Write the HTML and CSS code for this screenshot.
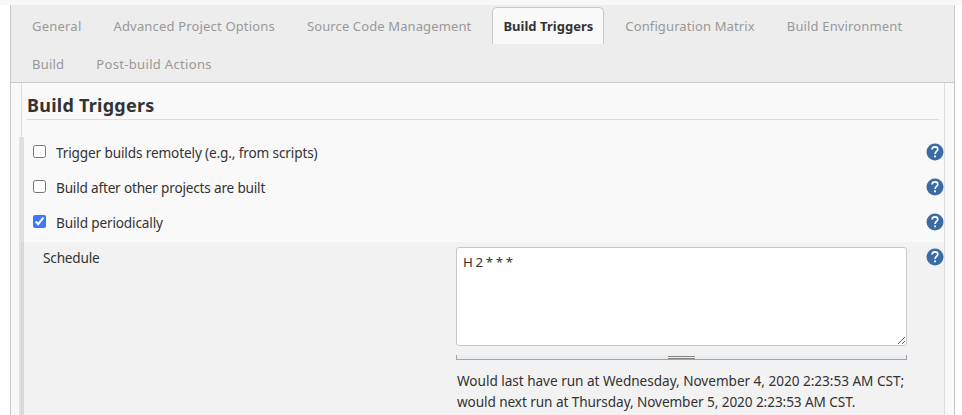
FILE: index.html
```html
<!DOCTYPE html>
<html lang="en">
<head>
<meta charset="utf-8">
<title>Build Triggers</title>
<link rel="stylesheet" href="styles.css">
</head>
<body>
<svg class="defs" width="0" height="0"><symbol id="help" viewBox="0 0 18 18"><circle cx="9" cy="9" r="8.5" fill="#3b6ba5"/><path d="M6.1 6.5C6.2 4.7 7.4 3.9 9 3.9s2.8.9 2.8 2.4c0 2-2.7 2.3-2.7 4.6" fill="none" stroke="#fff" stroke-width="1.7"/><rect x="8.1" y="12.4" width="1.9" height="1.9" fill="#fff"/></symbol></svg>
<main class="frame">
  <nav class="tabs">
    <a class="tab general">General</a>
    <a class="tab advanced">Advanced Project Options</a>
    <a class="tab source">Source Code Management</a>
    <a class="tab active">Build Triggers</a>
    <a class="tab matrix">Configuration Matrix</a>
    <a class="tab environment">Build Environment</a>
    <a class="tab build">Build</a>
    <a class="tab post">Post-build Actions</a>
  </nav>
  <form class="panel">
    <h2 class="title">Build Triggers</h2>
    <div class="section">
      <div class="row"><label class="choice"><input type="checkbox"><span class="t1">Trigger builds remotely (e.g., from scripts)</span></label><svg class="help"><use href="#help"/></svg></div>
      <div class="row"><label class="choice"><input type="checkbox"><span class="t2">Build after other projects are built</span></label><svg class="help"><use href="#help"/></svg></div>
      <div class="row"><label class="choice"><input type="checkbox" checked><span class="t3">Build periodically</span></label><svg class="help"><use href="#help"/></svg></div>
      <div class="schedule">
        <label class="name" for="spec">Schedule</label>
        <div class="field">
          <textarea id="spec" spellcheck="false">H 2 * * *</textarea>
          <div class="grip"><i></i></div>
          <p class="note"><span class="n1">Would last have run at Wednesday, November 4, 2020 2:23:53 AM CST;</span><br><span class="n2">would next run at Thursday, November 5, 2020 2:23:53 AM CST.</span></p>
        </div>
        <svg class="help"><use href="#help"/></svg>
      </div>
    </div>
  </form>
</main>
</body>
</html>
```
FILE: styles.css
```css
* { box-sizing: border-box; }
html { background: #fff; }
body {
  margin: 0;
  height: 415px;
  overflow: hidden;
  border-top: 5px solid #f8f8f8;
  font: 13.6px/21px "Noto Sans", sans-serif;
  color: #333;
}
.defs { display: block; }
.frame {
  width: 945px;
  height: 410px;
  margin-left: 10px;
  border: solid #c8c8c8;
  border-width: 0 1px;
  background: #f9f9f9;
  overflow: hidden;
}
.tabs {
  display: flex;
  flex-wrap: wrap;
  align-content: flex-start;
  gap: 1px 10px;
  height: 78px;
  padding: 2px 10px 0;
  background: #ededed;
  border-bottom: 1px solid #c8c8c8;
}
.tab {
  height: 37px;
  padding: 8px 10px 0;
  border: 1px solid transparent;
  border-bottom: 0;
  border-radius: 5px 5px 0 0;
  color: #999;
  font-size: 13px;
  line-height: 21px;
  white-space: nowrap;
}
.general, .build { letter-spacing: 0.22px; }
.advanced { letter-spacing: 0.17px; }
.source, .matrix { letter-spacing: 0.12px; }
.environment { letter-spacing: 0.15px; }
.post { letter-spacing: 0.33px; }
.tab.active {
  color: #333;
  font-weight: bold;
  letter-spacing: 0.03px;
  background: #f9f9f9;
  border-color: #c8c8c8;
}
.panel {
  width: 924px;
  height: 332px;
  margin-left: 10px;
  border: solid #ddd;
  border-width: 0 1px;
}
.title {
  margin: 0 5px 17px;
  height: 37px;
  padding-top: 9px;
  font-size: 18px;
  line-height: 26px;
  letter-spacing: 0.25px;
  border-bottom: 1px solid #ddd;
}
.section {
  height: 278px;
  margin-left: -3px;
  border-left: 5px solid #e0e0e0;
}
.row { display: flex; height: 35px; justify-content: space-between; padding-top: 6px; }
.choice { display: flex; padding-left: 9px; white-space: nowrap; }
.choice input { width: 13px; height: 13px; margin: 2px 10px 0 0; accent-color: #3b76ff; }
.choice span { margin-top: -1px; }
.t1 { letter-spacing: -0.13px; }
.t2 { letter-spacing: -0.19px; }
.t3 { letter-spacing: -0.15px; }
.help { width: 18px; height: 18px; flex: none; }
.schedule {
  display: flex;
  height: 173px;
  margin-left: -3px;
  padding-top: 5px;
  border-left: 3px solid #d9d9d9;
  background: #f2f2f2;
}
.name { width: 432px; padding-left: 19px; letter-spacing: -0.18px; }
.field { width: 451px; margin-right: 19px; }
textarea {
  display: block;
  width: 451px;
  height: 99px;
  padding: 4px 6px;
  border: 1px solid #c8c8c8;
  border-radius: 3px;
  font: inherit;
  font-size: 13.3px;
  letter-spacing: -0.4px;
  color: inherit;
}
.grip {
  display: flex;
  justify-content: center;
  height: 5px;
  margin: 9px 0 10px;
  border: 1px solid #9ba5b0;
  border-top: 0;
  background: #e9eef3;
}
.grip i { width: 27px; height: 3px; margin-top: 1px; border: solid #888; border-width: 1px 0; }
.note { margin: 0; padding-left: 1px; white-space: nowrap; }
.n1 { letter-spacing: -0.03px; }
.n2 { letter-spacing: -0.08px; }
.schedule .help { margin-top: 1px; }
```
